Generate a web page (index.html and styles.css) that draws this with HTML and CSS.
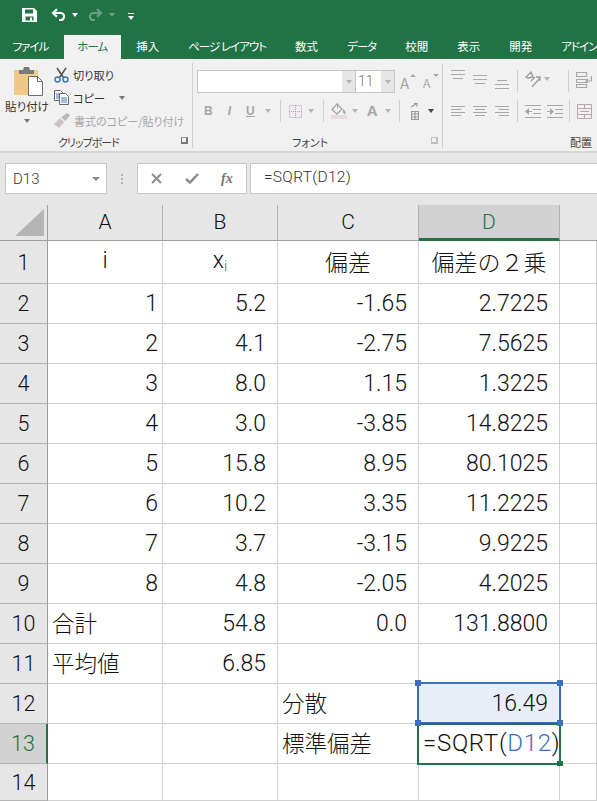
FILE: index.html
```html
<!DOCTYPE html>
<html lang="ja">
<head>
<meta charset="utf-8">
<title>Excel</title>
<link rel="stylesheet" href="styles.css">
</head>
<body>
<div class="app">
  <header class="top">
    <div class="qat">
      <svg class="q-save" width="15" height="14" viewBox="0 0 15 14"><path fill="#fff" fill-rule="evenodd" d="M0 0h12l3 3v11H0zM3 1.5v4h8v-4zM3.5 8.5v4h8v-4zM8 9.5h2v3H8z"/></svg>
      <svg class="q-undo" width="15" height="13" viewBox="0 0 15 13"><path fill="none" stroke="#fff" stroke-width="2.2" d="M6 1.2 2 5l4 3.8M2 5h7.5a3.6 3.6 0 0 1 0 7.2H8"/></svg>
      <i class="caret caret-w q-c1"></i>
      <svg class="q-redo" width="15" height="13" viewBox="0 0 15 13"><path fill="none" stroke="#6c9f84" stroke-width="2.2" d="M9 1.2 13 5 9 8.800M13 5H5.500a3.600 3.600 0 0 0 0 7.200H7"/></svg>
      <i class="caret caret-dim q-c2"></i>
      <div class="q-custom"><b></b><i class="caret caret-w"></i></div>
    </div>
    <nav class="tabs">
      <span class="tab tab-kana">ファイル</span>
      <span class="tab tab-on tab-kana">ホーム</span>
      <span class="tab">挿入</span>
      <span class="tab tab-kana">ページ レイアウト</span>
      <span class="tab">数式</span>
      <span class="tab tab-kana">データ</span>
      <span class="tab">校閲</span>
      <span class="tab">表示</span>
      <span class="tab">開発</span>
      <span class="tab tab-kana">アドイン</span>
    </nav>
  </header>

  <section class="ribbon">
    <div class="group g-clip">
      <div class="g-body clip-body">
        <div class="paste">
          <svg width="30" height="30" viewBox="0 0 30 30">
            <path fill="#efc985" d="M0 3h24v25H0z"/>
            <path fill="#7a7a7a" d="M5 3h4l1-3h5l1 3h4v4H5z"/>
            <path fill="#fff" stroke="#6e6e6e" d="M14.500 9.500h9l5 5v14h-14z"/>
            <path fill="none" stroke="#6e6e6e" d="M23.500 9.500v5h5"/>
          </svg>
          <span class="paste-label">貼り付け</span>
          <i class="caret caret-g"></i>
        </div>
        <div class="clip-actions">
          <div class="act">
            <svg width="15" height="16" viewBox="0 0 15 16"><path fill="none" stroke="#555" stroke-width="1.500" d="M3 1l6.500 9.500M12 1 5.500 10.500"/><circle cx="3.500" cy="12.500" r="2.500" fill="none" stroke="#3f78b8" stroke-width="1.500"/><circle cx="11.500" cy="12.500" r="2.500" fill="none" stroke="#3f78b8" stroke-width="1.500"/></svg>
            <span>切り取り</span>
          </div>
          <div class="act">
            <svg width="15" height="15" viewBox="0 0 15 15"><path fill="#fff" stroke="#666" d="M.500.500h6l2 2v8h-8z"/><path fill="#fff" stroke="#666" d="M5.500 3.500h6l3 3v8h-9z"/><path stroke="#3f78b8" d="M2 4h3M2 6h3M2 8h3M7 8h6M7 10h6M7 12h6"/></svg>
            <span>コピー</span>
            <i class="caret caret-g act-caret"></i>
          </div>
          <div class="act act-off">
            <svg width="16" height="15" viewBox="0 0 16 15"><path fill="#c8c4c8" d="M0 11 6 5l4 4-5 6z"/><path fill="#b8b8b8" d="M7 4l2-1 4-3 3 2-3 4-2 2z"/></svg>
            <span>書式のコピー/貼り付け</span>
          </div>
        </div>
      </div>
      <div class="g-label clip-label">クリップボード<i class="launcher"></i></div>
    </div>
    <i class="vsep"></i>

    <div class="group g-font">
      <div class="g-body">
        <div class="font-row1">
          <div class="combo combo-font"><span class="combo-drop"><i class="caret caret-l"></i></span></div>
          <div class="combo combo-size"><span class="size-val">11</span><span class="combo-drop"><i class="caret caret-l"></i></span></div>
          <span class="grow grow-up">A<i class="tri tri-up"></i></span>
          <span class="grow grow-down">A<i class="tri tri-down"></i></span>
        </div>
        <div class="font-row2">
          <span class="fmt fmt-b">B</span>
          <span class="fmt fmt-i">I</span>
          <span class="fmt fmt-u">U</span>
          <i class="caret caret-l m-c1"></i>
          <i class="tsep m-s1"></i>
          <svg class="m-border" width="13" height="13" viewBox="0 0 13 13"><path fill="#f4eaf4" d="M0 0h13v13H0z"/><path fill="none" stroke="#b0a8b0" stroke-dasharray="1 1" d="M.500.500h12v12H.500zM6.500 0v13M0 6.500h13"/></svg>
          <i class="caret caret-l m-c2"></i>
          <i class="tsep m-s2"></i>
          <svg class="m-fill" width="16" height="16" viewBox="0 0 16 16"><path fill="none" stroke="#a8a8a8" stroke-width="1.300" d="M6 1 1 6.500 6 11l5-5z"/><path fill="#a8a8a8" d="M12 6c2 1.500 3 3 2.500 4.500S11 10 12 6zM6 .5h1v5H6z"/><path fill="#e4dcdc" d="M0 12h16v4H0z"/></svg>
          <i class="caret caret-l m-c3"></i>
          <span class="fmt fmt-a">A</span>
          <i class="caret caret-l m-c4"></i>
          <i class="tsep m-s3"></i>
          <svg class="m-ruby" width="8" height="17" viewBox="0 0 8 17"><path fill="none" stroke="#9a9a9a" stroke-width="1.200" d="M0 4 5 1M3 .6h3v3M.5 8.500h7v8h-7zM0 11h8M0 14h8M4 8v9"/></svg>
          <i class="caret caret-d m-c5"></i>
        </div>
      </div>
      <div class="g-label font-label">フォント<i class="launcher launcher-l"></i></div>
    </div>
    <i class="vsep"></i>

    <div class="group g-align">
      <div class="g-body">
        <div class="align-row1">
          <svg class="al al-top" width="14" height="9" viewBox="0 0 14 9"><path stroke="#a8a8a8" d="M0 .500h14M0 4.500h14M2 8.500h10"/></svg>
          <svg class="al al-mid" width="14" height="9" viewBox="0 0 14 9"><path stroke="#a8a8a8" d="M0 .500h14M0 4.500h14M2 8.500h10"/></svg>
          <svg class="al al-bot" width="14" height="9" viewBox="0 0 14 9"><path stroke="#a8a8a8" d="M2 .500h10M0 4.500h14M0 8.500h14"/></svg>
          <i class="tsep tsep-tall a-s1"></i>
          <svg class="a-orient" width="16" height="16" viewBox="0 0 16 16"><path fill="none" stroke="#9c9c9c" stroke-width="1.300" d="M1 6l5-5 2 5-5 1zM7 16l8-9M11 6h4v4M6 10l4-4"/></svg>
          <i class="caret caret-l a-c1"></i>
          <i class="tsep tsep-tall a-s2"></i>
          <svg class="a-wrap" width="16" height="16" viewBox="0 0 16 16"><path fill="none" stroke="#a8a8a8" stroke-width="1.200" d="M.500.500h10v4h-10zM.500 7.500h10v3h-10zM.500 12.500h10v3h-10zM15.500 4v5h-5M12 7l-2 2 2 2"/></svg>
        </div>
        <div class="align-row2">
          <svg class="al" width="14" height="11" viewBox="0 0 14 11"><path stroke="#a8a8a8" d="M0 .500h14M0 3.500h10M0 6.500h14M0 9.500h10"/></svg>
          <svg class="al" width="14" height="11" viewBox="0 0 14 11"><path stroke="#a8a8a8" d="M0 .500h14M2 3.500h10M0 6.500h14M2 9.500h10"/></svg>
          <svg class="al" width="14" height="11" viewBox="0 0 14 11"><path stroke="#a8a8a8" d="M0 .500h14M4 3.500h10M0 6.500h14M4 9.500h10"/></svg>
          <i class="tsep tsep-tall a-s1"></i>
          <svg class="a-ind1" width="16" height="13" viewBox="0 0 16 13"><path stroke="#a8a8a8" d="M0 .500h16M8 4.500h8M8 8.500h8M0 12.500h16M1 6.500h6"/><path fill="#a8a8a8" d="M0 6.500 4 3v7z"/></svg>
          <svg class="a-ind2" width="16" height="13" viewBox="0 0 16 13"><path stroke="#a8a8a8" d="M0 .500h16M8 4.500h8M8 8.500h8M0 12.500h16M0 6.500h5"/><path fill="#a8a8a8" d="M7 6.500 3 3v7z"/></svg>
          <i class="tsep tsep-tall a-s3"></i>
          <svg class="a-merge" width="15" height="15" viewBox="0 0 15 15"><path fill="#f6eef0" stroke="#b8a8ae" d="M.500.500h14v14H.500z"/><path stroke="#b8a8ae" d="M0 4.500h15M0 10.500h15M7.500 0v4M7.500 11v4M3 7.500h9"/></svg>
        </div>
      </div>
      <div class="g-label align-label">配置</div>
    </div>
  </section>

  <section class="fbar">
    <div class="namebox"><span>D13</span><i class="caret caret-n"></i></div>
    <div class="grip"><b></b><b></b><b></b></div>
    <div class="fbtns">
      <svg width="11" height="11" viewBox="0 0 11 11"><path stroke="#8a8a8a" stroke-width="1.800" d="M1 1l9 9M10 1l-9 9"/></svg>
      <svg class="f-check" width="14" height="11" viewBox="0 0 14 11"><path fill="none" stroke="#8a8a8a" stroke-width="2.400" d="M1 6l4 3.500L13 1"/></svg>
      <span class="fx">fx</span>
    </div>
    <div class="finput">=SQRT(D12)</div>
  </section>

  <section class="sheet">
    <div class="corner"><svg width="29" height="27" viewBox="0 0 29 27"><path fill="#b4b4b4" d="M29 0v27H0z"/></svg></div>
    <div class="ch">A</div><div class="ch">B</div><div class="ch">C</div><div class="ch ch-on">D</div><div class="ch ch-end"></div>

    <div class="rh">1</div><div class="c ctr">i</div><div class="c ctr">x<sub>i</sub></div><div class="c ctr">偏差</div><div class="c ctr">偏差の２乗</div><div class="c"></div>

    <div class="rh">2</div><div class="c num-a">1</div><div class="c num">5.2</div><div class="c num">-1.65</div><div class="c num">2.7225</div><div class="c"></div>
    <div class="rh">3</div><div class="c num-a">2</div><div class="c num">4.1</div><div class="c num">-2.75</div><div class="c num">7.5625</div><div class="c"></div>
    <div class="rh">4</div><div class="c num-a">3</div><div class="c num">8.0</div><div class="c num">1.15</div><div class="c num">1.3225</div><div class="c"></div>
    <div class="rh">5</div><div class="c num-a">4</div><div class="c num">3.0</div><div class="c num">-3.85</div><div class="c num">14.8225</div><div class="c"></div>
    <div class="rh">6</div><div class="c num-a">5</div><div class="c num">15.8</div><div class="c num">8.95</div><div class="c num">80.1025</div><div class="c"></div>
    <div class="rh">7</div><div class="c num-a">6</div><div class="c num">10.2</div><div class="c num">3.35</div><div class="c num">11.2225</div><div class="c"></div>
    <div class="rh">8</div><div class="c num-a">7</div><div class="c num">3.7</div><div class="c num">-3.15</div><div class="c num">9.9225</div><div class="c"></div>
    <div class="rh">9</div><div class="c num-a">8</div><div class="c num">4.8</div><div class="c num">-2.05</div><div class="c num">4.2025</div><div class="c"></div>
    <div class="rh">10</div><div class="c txt">合計</div><div class="c num">54.8</div><div class="c num">0.0</div><div class="c num">131.8800</div><div class="c"></div>
    <div class="rh">11</div><div class="c txt">平均値</div><div class="c num">6.85</div><div class="c"></div><div class="c"></div><div class="c"></div>
    <div class="rh">12</div><div class="c"></div><div class="c"></div><div class="c txt">分散</div>
    <div class="c num c-ref">16.49<i class="ref-box"></i><i class="h h-tl"></i><i class="h h-tr"></i><i class="h h-bl"></i><i class="h h-br"></i></div><div class="c"></div>
    <div class="rh rh-on">13</div><div class="c"></div><div class="c"></div><div class="c txt">標準偏差</div>
    <div class="c c-edit"><span class="edit">=SQRT(<span class="ref-txt">D12</span>)</span><i class="edit-box"></i><i class="edit-h"></i></div><div class="c"></div>
    <div class="rh">14</div><div class="c"></div><div class="c"></div><div class="c"></div><div class="c"></div><div class="c"></div>
  </section>
</div>
</body>
</html>
```
FILE: styles.css
```css
* { box-sizing: border-box; }
html, body { margin: 0; padding: 0; }
body { width: 597px; height: 801px; overflow: hidden; background: #fff; font-family: "Noto Sans CJK JP", "Liberation Sans", sans-serif; color: #111; font-feature-settings: "palt"; }
i { display: block; font-style: normal; }
.app { display: flex; flex-direction: column; width: 597px; height: 801px; overflow: hidden; }

/* title + tabs */
.top { height: 59px; background: #217346; flex: none; }
.qat { height: 30px; margin-bottom: 5px; display: flex; align-items: center; padding: 0 0 1px 22px; }
.q-undo { margin-left: 14px; }
.q-c1 { margin-left: 6px; }
.q-redo { margin-left: 10px; }
.q-c2 { margin-left: 6px; }
.q-custom { margin-left: 13px; display: flex; flex-direction: column; align-items: center; gap: 2px; padding-top: 3px; }
.q-custom b { display: block; width: 6px; height: 1px; background: #fff; }
.tabs { height: 24px; display: flex; margin-left: -2px; white-space: nowrap; }
.tab { padding: 0 14.500px; font-size: 11.500px; line-height: 23px; color: #fff; flex: none; }
.tab-kana { letter-spacing: -1px; }
.tab-on { background: #f1f1f1; color: #217346; padding: 0 13.500px; margin: 0 1px; }

.caret { width: 0; height: 0; border-left: 3.500px solid transparent; border-right: 3.500px solid transparent; border-top: 4px solid #666; flex: none; }
.caret-w { border-top-color: #fff; }
.caret-dim { border-top-color: #6c9f84; }
.caret-g { border-top-color: #777; }
.caret-l { border-top-color: #b4b4b4; }
.caret-d { border-top-color: #444; }
.caret-n { border-top-color: #888; border-left-width: 4px; border-right-width: 4px; }

/* ribbon */
.ribbon { height: 94px; flex: none; display: flex; background: #f1f1f1; border-bottom: 2px solid #d6d6d6; overflow: hidden; }
.group { display: flex; flex-direction: column; flex: none; height: 92px; }
.g-body { height: 73px; }
.g-label { height: 19px; font-size: 11px; line-height: 19px; color: #444; position: relative; white-space: nowrap; padding-top: 1px; }
.vsep { width: 1px; height: 85px; margin-top: 4px; background: #d0d0d0; flex: none; }
.launcher { position: absolute; right: 4px; top: 5px; width: 7px; height: 7px; border-left: 1px solid #777; border-top: 1px solid #777; border-right: 2px solid #777; border-bottom: 2px solid #777; border-top-color: #999; }
.launcher-l { border-color: #c0c0c0; }

.g-clip { width: 192px; }
.clip-body { display: flex; }
.paste { width: 54px; display: flex; flex-direction: column; align-items: center; padding-top: 8px; }
.paste svg { margin-left: 4px; }
.paste-label { font-size: 11.500px; line-height: 17px; margin-top: 1px; color: #333; white-space: nowrap; }
.paste .caret { margin-top: 4px; }
.clip-actions { display: flex; flex-direction: column; padding-top: 4px; }
.act { height: 23px; display: flex; align-items: center; gap: 4px; font-size: 11.200px; color: #333; white-space: nowrap; }
.act svg { flex: none; }
.act-caret { margin-left: 10px; }
.act-off { color: #a6a6a6; font-size: 11px; }
.clip-label { padding-left: 58px; letter-spacing: -1px; }
.clip-label .launcher { right: 4px; }

.g-font { width: 249px; }
.font-row1 { display: flex; align-items: flex-start; padding: 11px 0 0 4px; height: 41px; }
.combo { height: 23px; background: #fff; border: 1px solid #c6c6c6; display: flex; justify-content: flex-end; }
.combo-font { width: 158px; border-right: 0; }
.combo-size { width: 40px; justify-content: space-between; }
.combo-drop { width: 13px; background: #e6e6e6; display: flex; align-items: center; justify-content: center; }
.combo-size .combo-drop { width: 13px; }
.size-val { font: 300 14px/21px "Roboto", sans-serif; padding-left: 2px; color: #777; }
.grow { position: relative; color: #a6a6a6; font-size: 14px; line-height: 23px; margin-top: 1px; width: 10px; }
.grow-up { margin-left: 5px; font-size: 15px; }
.grow-down { margin-left: 13px; font-size: 12px; }
.tri { position: absolute; width: 0; height: 0; border-left: 3px solid transparent; border-right: 3px solid transparent; left: 10px; top: 3px; }
.tri-up { border-bottom: 3px solid #a6a6a6; }
.tri-down { border-top: 3px solid #a6a6a6; }
.font-row2 { display: flex; align-items: center; height: 24px; padding-left: 11px; margin-top: -1px; }
.fmt { color: #a6a6a6; font-size: 12px; font-weight: 700; font-family: "Liberation Sans", sans-serif; line-height: 16px; }
.fmt-i { font-style: italic; margin-left: 15px; }
.fmt-u { text-decoration: underline; margin-left: 15px; }
.fmt-a { font-size: 15px; margin-left: 9px; }
.tsep { width: 1px; height: 22px; background: #d0d0d0; flex: none; }
.tsep-tall { height: 22px; }
.m-c1 { margin-left: 10px; }
.m-s1 { margin-left: 9px; }
.m-border { margin-left: 8px; }
.m-c2 { margin-left: 6px; }
.m-s2 { margin-left: 9px; }
.m-fill { margin-left: 7px; }
.m-c3 { margin-left: 5px; }
.m-c4 { margin-left: 7px; }
.m-s3 { margin-left: 8px; }
.m-ruby { margin-left: 11px; }
.m-c5 { margin-left: 9px; }
.font-label { padding-left: 99px; }
.font-label .launcher { right: 4px; }

.g-align { width: 160px; }
.align-row1 { display: flex; align-items: flex-start; padding: 11px 0 0 8px; height: 41px; }
.al { flex: none; margin-right: 8px; }
.al-top { margin-top: 0; }
.al-mid { margin-top: 5px; }
.al-bot { margin-top: 10px; }
.a-s1 { margin-left: 0; margin-right: 7px; }
.align-row1 .tsep { margin-top: 0; }
.a-orient { flex: none; margin-top: 1px; }
.a-c1 { margin-top: 7px; margin-left: 3px; }
.a-s2 { margin-left: 18px; margin-right: 7px; }
.a-wrap { flex: none; margin-top: 2px; }
.align-row2 { display: flex; align-items: center; height: 24px; padding-left: 8px; margin-top: -1px; }
.a-ind2 { margin-left: 6px; flex: none; }
.a-ind1 { flex: none; }
.a-s3 { margin-left: 6px; margin-right: 7px; }
.a-merge { flex: none; }
.align-label { padding-left: 127px; }

/* formula bar */
.fbar { height: 52px; flex: none; background: #e6e6e6; display: flex; align-items: flex-start; padding: 10px 0 0 5px; }
.namebox { width: 102px; height: 31px; background: #fff; border: 1px solid #c6c6c6; display: flex; align-items: center; justify-content: space-between; padding: 0 6px 0 7px; font: 300 15px "Roboto", sans-serif; color: #333; }
.grip { width: 30px; height: 31px; display: flex; flex-direction: column; align-items: center; justify-content: center; gap: 2px; }
.grip b { display: block; width: 2px; height: 2px; background: #b0b0b0; }
.fbtns { width: 110px; height: 31px; background: #fff; border: 1px solid #c6c6c6; display: flex; align-items: center; padding-left: 13px; }
.f-check { margin-left: 23px; }
.fx { margin-left: 22px; font: italic 700 14px "Liberation Serif", serif; color: #777; }
.finput { flex: 1; height: 31px; margin-left: 3px; background: #fff; border: 1px solid #c6c6c6; border-right: 0; font: 300 15.500px/27px "Roboto", sans-serif; letter-spacing: .3px; padding-left: 13px; color: #333; }

/* sheet */
.sheet { flex: 1; display: grid; grid-template-columns: 48px 115px 115px 141px 141px 37px; grid-template-rows: 36px 43px repeat(12, 40px) 37px; background: #fff; font: 300 23px "Roboto", "Noto Sans CJK JP", sans-serif; overflow: hidden; }
.corner { background: #e6e6e6; border-right: 1px solid #9e9e9e; border-bottom: 1px solid #9e9e9e; padding: 4px 0 0 15px; }
.corner svg { display: block; }
.ch { background: #e6e6e6; border-right: 1px solid #b4b4b4; border-bottom: 1px solid #9e9e9e; display: flex; align-items: center; justify-content: center; font-size: 21px; padding-bottom: 2px; }
.ch-end { border-right: 0; }
.ch-on { background: #d2d2d2; color: #217346; border-bottom: 3px solid #217346; padding-bottom: 0; height: 36px; }
.rh { background: #e6e6e6; border-right: 1px solid #9e9e9e; border-bottom: 1px solid #b4b4b4; display: flex; align-items: center; justify-content: center; font-size: 21.500px; }
.rh-on { background: #d2d2d2; color: #217346; border-right: 2px solid #217346; }
.c { border-right: 1px solid #d0d0d0; border-bottom: 1px solid #d0d0d0; display: flex; align-items: center; white-space: nowrap; min-width: 0; padding-bottom: 1px; }
.ctr { justify-content: center; padding-bottom: 3px; }
.ctr sub { font-size: 14px; vertical-align: baseline; position: relative; top: 5px; color: #2b5f9e; }
.num { justify-content: flex-end; padding-right: 11px; }
.num-a { justify-content: flex-end; padding-right: 4px; }
.txt { padding-left: 4px; padding-bottom: 4px; font-size: 22.500px; }

.c-ref { position: relative; background: #e8eef8; }
.ref-box { position: absolute; left: -2px; right: -2px; top: -2px; bottom: -1px; border: 2px solid #3a6fc4; }
.h { position: absolute; width: 6px; height: 6px; background: #3a6fc4; border: 0; z-index: 3; }
.h-tl { left: -4px; top: -4px; }
.h-tr { right: -4px; top: -4px; }
.h-bl { left: -4px; bottom: -3px; }
.h-br { right: -4px; bottom: -3px; }
.c-edit { position: relative; overflow: visible; z-index: 2; padding-left: 4px; }
.edit { position: relative; font-size: 24px; letter-spacing: .7px; }
.ref-txt { color: #3a6fc4; }
.edit-box { position: absolute; left: -2px; right: -2px; top: -1px; bottom: -2px; border: 2px solid #217346; }
.edit-h { position: absolute; right: -4px; bottom: -3px; width: 6px; height: 5px; background: #217346; }
```
